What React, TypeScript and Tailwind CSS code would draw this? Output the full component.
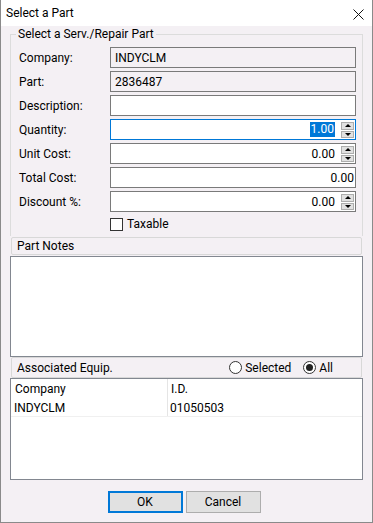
import React from "react";

const font = { fontFamily: '"Segoe UI", Roboto, "Noto Sans", sans-serif' };

function Spinner() {
  return (
    <div className="absolute right-[1px] top-[2px] flex h-[16px] w-[13px] flex-col gap-[1px]">
      <div className="flex h-[8px] items-center justify-center border border-[#adadad] bg-[#e1e1e1]">
        <div className="h-0 w-0 border-x-[3px] border-b-[3px] border-x-transparent border-b-black" />
      </div>
      <div className="flex h-[8px] items-center justify-center border border-[#adadad] bg-[#e1e1e1]">
        <div className="h-0 w-0 border-x-[3px] border-t-[3px] border-x-transparent border-t-black" />
      </div>
    </div>
  );
}

function Row({
  label,
  value,
  kind,
}: {
  label: string;
  value?: string;
  kind: "readonly" | "text" | "spin" | "focus" | "num";
}) {
  const border =
    kind === "focus" ? "border-[#0078d7]" : "border-[#7a7a7a]";
  const bg = kind === "readonly" ? "bg-transparent" : "bg-white";
  const right = kind === "spin" || kind === "focus";
  return (
    <div className="flex h-[21px] items-center">
      <div className="w-[99px] pl-[8px] text-[12px] text-black">{label}</div>
      <div
        className={`relative flex h-[21px] w-[246px] items-center border ${border} ${bg} ${
          kind === "readonly" || kind === "text" ? "justify-start pl-[4px]" : "justify-end"
        } ${right ? "pr-[20px]" : kind === "num" ? "pr-[1px]" : ""}`}
      >
        {kind === "focus" ? (
          <span className="flex items-center text-[12px]">
            <span className="bg-[#0078d7] px-[1px] leading-[15px] text-white">1.00</span>
          </span>
        ) : (
          <span className="text-[12px] text-black">{value}</span>
        )}
        {right && <Spinner />}
      </div>
    </div>
  );
}

function Radio({ label, checked }: { label: string; checked?: boolean }) {
  return (
    <div className="flex items-center gap-[3px]">
      <div className="flex h-[13px] w-[13px] items-center justify-center rounded-full border border-[#333] bg-white">
        {checked && <div className="h-[7px] w-[7px] rounded-full bg-[#222]" />}
      </div>
      <span className="text-[12px] text-black">{label}</span>
    </div>
  );
}

export default function App() {
  return (
    <div className="h-[523px] w-[373px] bg-white" style={font}>
      <div className="flex h-[523px] w-[373px] flex-col border-x border-b border-[#8a8a8a] bg-[#f4f0f4]">
        {/* TITLE BAR */}
        <div className="flex h-[26px] shrink-0 items-center justify-between bg-white pl-[5px] pr-[8px]">
          <span className="text-[12px] text-black">Select a Part</span>
          <svg width="11" height="11" viewBox="0 0 11 11" className="mt-[2px]">
            <path d="M0.5 0.5 L10.5 10.5 M10.5 0.5 L0.5 10.5" stroke="#111" strokeWidth="1" />
          </svg>
        </div>

        {/* GROUP BOX */}
        <div className="relative ml-[9px] mt-[8px] h-[202px] w-[353px] border-x border-t border-[#dcdcdc]">
          <div className="absolute -top-[9px] left-[5px] bg-[#f4f0f4] px-[2px] text-[12px] leading-[16px] text-black">
            Select a Serv./Repair Part
          </div>
          <div className="mt-[12px] flex flex-col gap-[3px]">
            <Row label="Company:" value="INDYCLM" kind="readonly" />
            <Row label="Part:" value="2836487" kind="readonly" />
            <Row label="Description:" kind="text" />
            <Row label="Quantity:" kind="focus" />
            <Row label="Unit Cost:" value="0.00" kind="spin" />
            <Row label="Total Cost:" value="0.00" kind="num" />
            <Row label="Discount %:" value="0.00" kind="spin" />
          </div>
          <div className="ml-[99px] mt-[3px] flex items-center gap-[4px]">
            <div className="h-[13px] w-[13px] border border-[#333] bg-white" />
            <span className="text-[12px] text-black">Taxable</span>
          </div>
        </div>

        {/* PART NOTES */}
        <div className="ml-[10px] mt-[1px] flex h-[18px] w-[351px] items-center rounded-[2px] border border-[#d8d8d8] pl-[5px] text-[12px] text-black">
          Part Notes
        </div>
        <div className="ml-[9px] mt-[1px] h-[101px] w-[353px] border border-[#828790] bg-white" />

        {/* ASSOCIATED EQUIP */}
        <div className="ml-[10px] flex h-[21px] w-[351px] items-center justify-between rounded-[2px] border border-[#d8d8d8] pl-[5px] pr-[28px]">
          <span className="text-[12px] text-black">Associated Equip.</span>
          <div className="flex items-center gap-[12px]">
            <Radio label="Selected" />
            <Radio label="All" checked />
          </div>
        </div>
        <div className="ml-[9px] h-[102px] w-[353px] border border-[#828790] bg-white">
          <div className="flex h-[20px] text-[12px] text-black">
            <div className="flex w-[157px] items-center border-r border-[#e5e5e5] pl-[4px]">Company</div>
            <div className="flex items-center pl-[3px]">I.D.</div>
          </div>
          <div className="flex h-[18px] border-b border-[#f0f0f0] text-[12px] text-black">
            <div className="flex w-[157px] items-center border-r border-[#e5e5e5] pl-[3px]">INDYCLM</div>
            <div className="flex items-center pl-[2px]">01050503</div>
          </div>
        </div>

        {/* BUTTONS */}
        <div className="mt-[11px] flex justify-center gap-[3px] pr-[5px]">
          <button className="flex h-[22px] w-[75px] items-center justify-center border-2 border-[#0078d7] bg-[#e1e1e1] text-[12px] text-black">
            OK
          </button>
          <button className="flex h-[22px] w-[75px] items-center justify-center border border-[#adadad] bg-[#e1e1e1] text-[12px] text-black">
            Cancel
          </button>
        </div>
      </div>
    </div>
  );
}
